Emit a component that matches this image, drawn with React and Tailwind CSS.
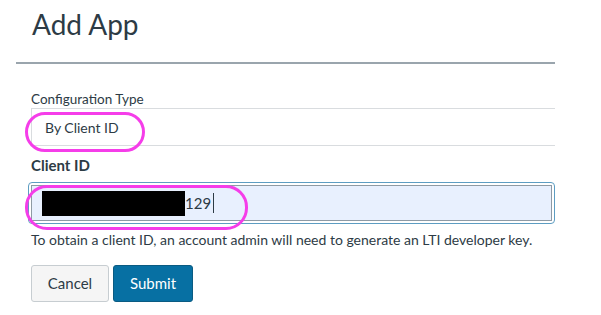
import React from "react";

export default function App() {
  return (
    <div className="relative w-[601px] h-[315px] bg-white overflow-hidden font-['Lato','Liberation_Sans',sans-serif] text-[#2d3b45]">
      <div className="ml-[16px] w-[539px] h-[64px] border-b-2 border-[#9aa5ad] pl-[16px] pt-[4px]">
        <h1 className="text-[28px] leading-[40px] font-normal">Add App</h1>
      </div>

      <div className="ml-[31px] w-[524px] pt-[26px]">
        <div className="text-[13.5px] leading-[18px] text-[#2d3b45]">Configuration Type</div>
        <div className="h-[38px] border-l border-y border-[#d9dcdf] flex items-center pl-[13px] text-[14px]">
          By Client ID
        </div>

        <div className="mt-[9px] text-[15px] leading-[20px] font-bold">Client ID</div>
        <div className="-ml-[3px] mt-[7px] border-[1.5px] border-[#5d9dc2] rounded-[4px] p-[2px] bg-white">
          <div className="h-[36px] border border-[#8e9aa4] bg-[#e8f0fe] flex items-center pl-[10px]">
            <div className="w-[143px] h-[25px] bg-black" />
            <span className="text-[15px] leading-[20px]">129</span>
            <span className="ml-[2px] w-[1px] h-[20px] bg-[#2d3b45]" />
          </div>
        </div>
        <p className="mt-[7px] text-[14px] leading-[18px] text-[#2d3b45]">
          To obtain a client ID, an account admin will need to generate an LTI developer key.
        </p>

        <div className="mt-[16px] flex gap-[4px]">
          <button className="w-[78px] h-[37px] bg-[#f5f5f5] border border-[#c7cdd1] rounded-[3px] text-[15px] text-[#2d3b45]">
            Cancel
          </button>
          <button className="w-[80px] h-[37px] bg-[#0770a3] border border-[#0a5b82] rounded-[3px] text-[15px] text-white">
            Submit
          </button>
        </div>
      </div>

      <div className="absolute left-[25px] top-[112px] w-[120px] h-[40px] border-[3.5px] border-[#f53de9] rounded-[20px]" />
      <div className="absolute left-[25px] top-[185px] w-[223px] h-[45px] border-[3.5px] border-[#f53de9] rounded-[22px]" />
    </div>
  );
}
